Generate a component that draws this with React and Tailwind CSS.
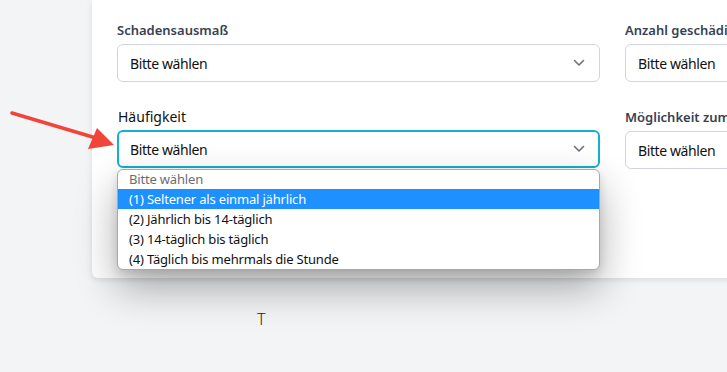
import React from "react";

const font = { fontFamily: '"Noto Sans", "Open Sans", sans-serif' };

function Chevron() {
  return (
    <svg width="12" height="8" viewBox="0 0 12 8" className="shrink-0">
      <path d="M1.5 1.5 L6 6 L10.5 1.5" fill="none" stroke="#6b7280" strokeWidth="1.6" strokeLinecap="round" strokeLinejoin="round" />
    </svg>
  );
}

function Select({ focused }) {
  return (
    <div
      className={
        "h-[38px] rounded-md bg-white flex items-center justify-between " +
        (focused ? "border-2 border-[#14b1cc] pl-[11px] pr-[13px]" : "border border-[#d1d5db] pl-[12px] pr-[14px]")
      }
    >
      <span className="text-[14px] tracking-[-0.4px] text-[#111]">Bitte wählen</span>
      <Chevron />
    </div>
  );
}

export default function App() {
  const options = [
    "(1) Seltener als einmal jährlich",
    "(2) Jährlich bis 14-täglich",
    "(3) 14-täglich bis täglich",
    "(4) Täglich bis mehrmals die Stunde",
  ];
  return (
    <div className="relative w-[727px] h-[372px] overflow-hidden bg-[#f3f4f6]" style={font}>
      <div className="relative ml-[92px] w-[700px] bg-white rounded-bl-md shadow-[0_2px_6px_rgba(0,0,0,0.1)] pt-[20px] pl-[25px] pb-[109px]">
        <div className="grid grid-cols-[483px_483px] gap-x-[25px]">
          <div className="flex flex-col gap-[4px]">
            <div className="h-[20px] leading-[20px] text-[13px] font-semibold text-[#374151]">Schadensausmaß</div>
            <Select />
          </div>
          <div className="flex flex-col gap-[4px]">
            <div className="h-[20px] leading-[20px] text-[13px] font-semibold text-[#374151] whitespace-nowrap">Anzahl geschädigter Personen</div>
            <Select />
          </div>
          <div className="relative flex flex-col gap-[3px] mt-[25px]">
            <div className="h-[20px] leading-[20px] text-[14px] text-[#111] pl-[1px]">Häufigkeit</div>
            <Select focused />
            <div className="absolute left-0 right-0 top-[62px] z-10 bg-white border border-[#a8a8a8] rounded-md overflow-hidden text-[13px] tracking-[-0.18px] leading-[20px]" style={{ boxShadow: "0 18px 40px rgba(0,0,0,0.32), 0 4px 10px rgba(0,0,0,0.12)" }}>
              <div className="h-[19px] leading-[18px] pl-[11px] text-[#6d6d6d]">Bitte wählen</div>
              <div className="h-[20px] pl-[11px] bg-[#1e90ff] text-white">{options[0]}</div>
              {options.slice(1).map((o) => (
                <div key={o} className="h-[20px] pl-[11px] text-[#111]">{o}</div>
              ))}
            </div>
          </div>
          <div className="flex flex-col gap-[4px] mt-[25px]">
            <div className="h-[20px] leading-[20px] text-[13px] font-semibold text-[#374151] whitespace-nowrap">Möglichkeit zum Entkommen</div>
            <Select />
          </div>
        </div>
      </div>
      <div className="pl-[257px] pt-[31px] text-[16px] leading-[20px] text-[#222] font-light">T</div>
      <svg className="absolute left-0 top-0 pointer-events-none" width="130" height="160" viewBox="0 0 130 160">
        <line x1="12" y1="113" x2="96" y2="138" stroke="#f1453b" strokeWidth="3.5" strokeLinecap="round" />
        <polygon points="114,145 97,128 88,149" fill="#f1453b" />
      </svg>
    </div>
  );
}
